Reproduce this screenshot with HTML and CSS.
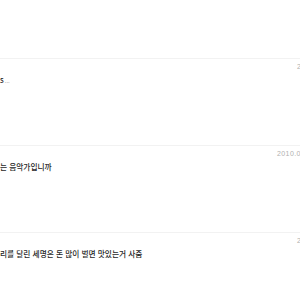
FILE: index.html
```html
<!DOCTYPE html>
<html lang="ko">
<head>
<meta charset="utf-8">
<link rel="stylesheet" href="styles.css">
</head>
<body>
<ul class="list">
  <li class="item">
    <div class="meta"><span class="date date-far">2010.05.12</span></div>
    <p class="title">s<span class="more">...</span></p>
  </li>
  <li class="item">
    <div class="meta"><span class="date">2010.05.12</span></div>
    <p class="title">는 음악가입니까</p>
  </li>
  <li class="item item-last">
    <div class="meta"><span class="date date-far">2010.05.12</span></div>
    <p class="title">리를 달린 세명은 돈 많이 벌면 맛있는거 사줌</p>
  </li>
</ul>
</body>
</html>
```
FILE: styles.css
```css
html, body {
  margin: 0;
  padding: 0;
  background: #ffffff;
  overflow: hidden;
  width: 300px;
  height: 300px;
}
.list {
  list-style: none;
  margin: 58px 0 0 0;
  padding: 0;
  font-family: "Noto Sans CJK KR", "Noto Sans", sans-serif;
}
.item {
  height: 87px;
  border-top: 1px solid #f2f2f2;
  box-sizing: border-box;
  display: flex;
  flex-direction: column;
}
.item-last {
  height: 68px;
}
.meta {
  display: flex;
  height: 14px;
  margin-top: 1px;
}
.date {
  margin-left: 277px;
  font-family: "Liberation Sans", sans-serif;
  font-size: 7px;
  letter-spacing: 0.4px;
  line-height: 14px;
  color: #b0b0b0;
  white-space: nowrap;
}
.date-far {
  margin-left: 297px;
}
.title {
  margin: 0;
  font-size: 7.7px;
  font-weight: 500;
  line-height: 12px;
  color: #1f1f1f;
  white-space: nowrap;
}
.more {
  font-size: 6px;
  font-weight: 400;
  color: #999999;
  margin-left: 1px;
}
```
